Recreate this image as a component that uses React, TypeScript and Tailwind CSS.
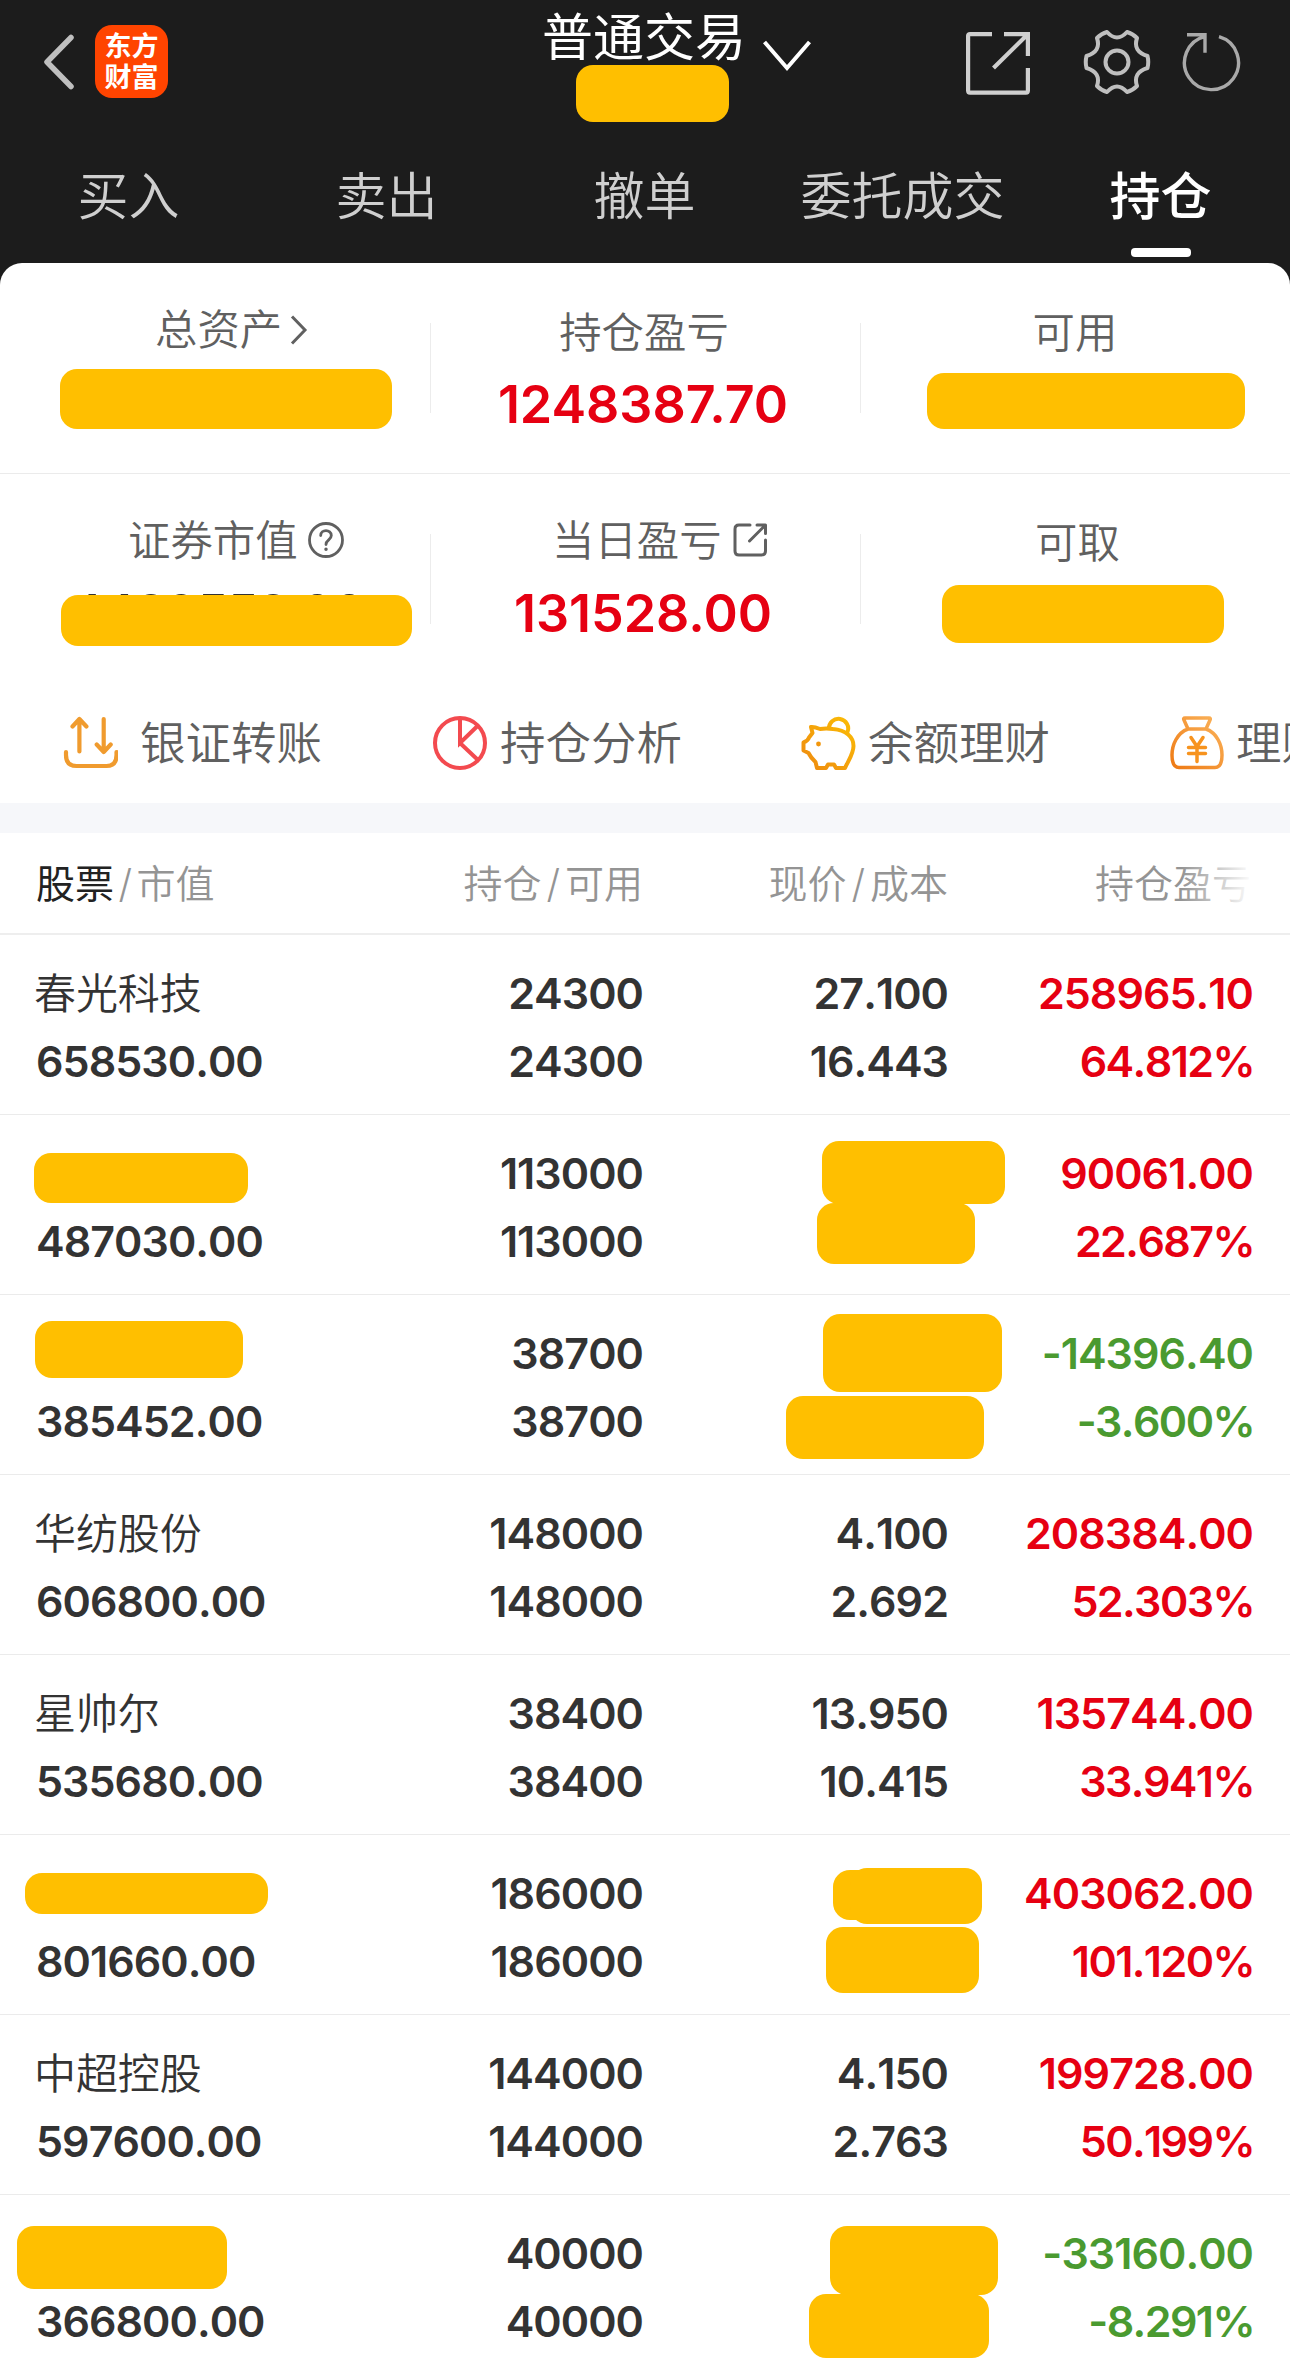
import clsx from "clsx";
import type { ReactNode } from "react";

type Holding = {
  name?: string;
  value: string;
  amount: string;
  price?: string;
  cost?: string;
  profit: string;
  rate: string;
  masks?: string[];
};

const tabs = ["买入", "卖出", "撤单", "委托成交", "持仓"];

const holdings: Holding[] = [
  { name: "春光科技", value: "658530.00", amount: "24300", price: "27.100", cost: "16.443", profit: "258965.10", rate: "64.812%" },
  {
    value: "487030.00", amount: "113000", profit: "90061.00", rate: "22.687%",
    masks: [
      "left-[34px] top-[38px] w-[214px] h-[50px]",
      "left-[822px] top-[26px] w-[183px] h-[63px]",
      "left-[817px] top-[88px] w-[158px] h-[61px]",
    ],
  },
  {
    value: "385452.00", amount: "38700", profit: "-14396.40", rate: "-3.600%",
    masks: [
      "left-[35px] top-[26px] w-[208px] h-[57px]",
      "left-[823px] top-[19px] w-[179px] h-[78px]",
      "left-[786px] top-[101px] w-[198px] h-[63px]",
    ],
  },
  { name: "华纺股份", value: "606800.00", amount: "148000", price: "4.100", cost: "2.692", profit: "208384.00", rate: "52.303%" },
  { name: "星帅尔", value: "535680.00", amount: "38400", price: "13.950", cost: "10.415", profit: "135744.00", rate: "33.941%" },
  {
    value: "801660.00", amount: "186000", profit: "403062.00", rate: "101.120%",
    masks: [
      "left-[25px] top-[38px] w-[243px] h-[41px]",
      "left-[833px] top-[35px] w-[60px] h-[50px]",
      "left-[850px] top-[33px] w-[132px] h-[56px]",
      "left-[826px] top-[92px] w-[153px] h-[66px]",
    ],
  },
  { name: "中超控股", value: "597600.00", amount: "144000", price: "4.150", cost: "2.763", profit: "199728.00", rate: "50.199%" },
  {
    value: "366800.00", amount: "40000", profit: "-33160.00", rate: "-8.291%",
    masks: [
      "left-[17px] top-[31px] w-[210px] h-[63px]",
      "left-[830px] top-[31px] w-[168px] h-[69px]",
      "left-[809px] top-[99px] w-[180px] h-[64px]",
    ],
  },
];

// Privacy block painted over a private figure
function Mask({ className }: { className: string }) {
  return <div className={clsx("rounded-[17px] bg-[#ffbf00]", className)} />;
}

function Header() {
  return (
    <header className="bg-[#1c1c1c] h-[285px]">
      <div className="flex h-[123px]">
        <div className="flex w-[542px] pl-[43px] pt-[25px]">
          <svg className="w-[32px] h-[56px] mt-[9px]" viewBox="0 0 32 56" fill="none" stroke="#bfbfbf" strokeWidth="5.5" strokeLinecap="round" strokeLinejoin="round">
            <path d="M28 3.5 4 28l24 24.5" />
          </svg>
          <div className="ml-[20px] flex size-[73px] flex-col items-center justify-center rounded-[17px] bg-[#ff4400] text-[27px] font-bold leading-[31px] text-white">
            <span>东方</span>
            <span>财富</span>
          </div>
        </div>
        <div className="flex w-[204px] flex-col items-center">
          <h1 className="h-[65px] whitespace-nowrap text-[51px] leading-[75px] text-white">普通交易</h1>
          <Mask className="ml-[34px] h-[57px] w-[153px] self-start" />
        </div>
        <svg className="ml-[16px] mt-[38px] h-[34px] w-[50px]" viewBox="0 0 50 34" fill="none" stroke="#fff" strokeWidth="4">
          <path d="m2.5 4 22.500 26 22.500-26" />
        </svg>
        <div className="flex pl-[151px] text-[#cfcfcf]">
          <svg className="mt-[29px] h-[68px] w-[68px]" viewBox="0 0 68 68" fill="none" stroke="currentColor" strokeWidth="4.2">
            <path d="M29 5.100H7Q5.100 5.100 5.100 7V61.500Q5.100 63.600 7 63.600H63Q64.900 63.600 64.900 61.500V39M41 5.100h23.900V27M64 6 30.500 39" />
          </svg>
          <svg className="ml-[52px] mt-[28px] h-[68px] w-[68px] text-[#bfbfbf]" viewBox="0 0 68 68" fill="none" stroke="currentColor" strokeWidth="4" strokeLinejoin="round">
            <path d="M24 4Q34 15 44 4Q49.500 5.500 54 10Q49.500 23.500 64.500 28Q66 34 64.500 40Q49.500 44.500 54 58Q49.500 62.500 44 64Q34 53 24 64Q18.500 62.500 14 58Q18.500 44.500 3.500 40Q2 34 3.500 28Q18.500 23.500 14 10Q18.500 5.500 24 4Z" />
            <circle cx="34" cy="34" r="11.500" />
          </svg>
          <svg className="ml-[31px] mt-[30px] h-[64px] w-[64px] text-[#a9a9a9]" viewBox="0 0 64 64" fill="none" stroke="currentColor" strokeWidth="3.4">
            <path d="M37 6.700A27 27 0 1 1 23.500 6.300M5 4.800h18v18" />
          </svg>
        </div>
      </div>
      <nav className="grid grid-cols-5">
        {tabs.map((tab) => (
          <div
            key={tab}
            className={clsx(
              "flex h-[140px] flex-col items-center pt-[37px] pr-[1px] text-[51px] leading-[74px]",
              tab === "持仓" ? "font-medium text-white" : "font-[350] text-[#cfcfcf]",
            )}
          >
            {tab}
            {tab === "持仓" && <span className="ml-[1px] mt-[14px] h-[9px] w-[60px] shrink-0 rounded-[4px] bg-white" />}
          </div>
        ))}
      </nav>
    </header>
  );
}

function Stat({ label, labelClass, children, divider }: { label: ReactNode; labelClass: string; children: ReactNode; divider?: boolean }) {
  return (
    <div className="relative">
      <div className={clsx("flex h-[60px] items-center text-[42.4px] font-[350] leading-[60px] text-[#606060]", labelClass)}>{label}</div>
      {children}
      {divider && <span className="absolute -right-px top-[60px] h-[90px] w-px bg-[#ececec]" />}
    </div>
  );
}

function Summary() {
  return (
    <section className="-mt-[22px] rounded-t-[22px] bg-white">
      <div className="grid h-[211px] grid-cols-3 border-b border-[#ebebeb]">
        <Stat
          divider
          labelClass="mt-[37px] pl-[155px]"
          label={
            <>
              总资产
              <svg className="ml-[7px] h-[32px] w-[20px]" viewBox="0 0 20 32" fill="none" stroke="currentColor" strokeWidth="3">
                <path d="m3 2.500 13 13.500L3 29.500" />
              </svg>
            </>
          }
        >
          <Mask className="ml-[60px] mt-[9px] h-[60px] w-[332px]" />
        </Stat>
        <Stat divider labelClass="mt-[40px] justify-center pr-[2px]" label="持仓盈亏">
          <div className="mt-[10px] pr-[4px] text-center text-[52px] font-semibold leading-[64px] text-[#e60012]">1248387.70</div>
        </Stat>
        <Stat labelClass="mt-[40px] justify-center" label="可用">
          <Mask className="ml-[67px] mt-[10px] h-[56px] w-[318px]" />
        </Stat>
      </div>
      <div className="grid h-[211px] grid-cols-3">
        <Stat
          divider
          labelClass="mt-[37px] pl-[128px]"
          label={
            <>
              证券市值
              <svg className="ml-[9px] -mt-[2px] h-[38px] w-[38px]" viewBox="0 0 38 38" fill="none" stroke="currentColor" strokeWidth="2.8" strokeLinecap="round">
                <circle cx="19" cy="19" r="16.500" />
                <path d="M13.700 14.500c0-6.500 10.600-6.500 10.600 0 0 4.500-5.300 4.300-5.300 9" />
                <circle cx="19" cy="28.300" r="1" fill="currentColor" strokeWidth="1.5" />
              </svg>
            </>
          }
        >
          <div className="relative mt-[10px] pl-[70px] text-[51px] font-medium leading-[64px] tracking-[-1.1px] text-[#333]">
            4439552.00
            <Mask className="absolute left-[61px] top-[14px] h-[51px] w-[351px]" />
          </div>
        </Stat>
        <Stat
          divider
          labelClass="mt-[37px] pl-[122px]"
          label={
            <>
              当日盈亏
              <svg className="ml-[9px] -mt-[2px] h-[36px] w-[38px]" viewBox="0 0 38 36" fill="none" stroke="currentColor" strokeWidth="3" strokeLinecap="round" strokeLinejoin="round">
                <path d="M19 3H8Q4 3 4 7v22q0 4 4 4h22.500q4 0 4-4V18M26 3h8.500v8.500M34 3.500 18.500 19" />
              </svg>
            </>
          }
        >
          <div className="mt-[11px] pr-[4px] text-center text-[52px] font-semibold leading-[64px] text-[#e60012]">131528.00</div>
        </Stat>
        <Stat labelClass="mt-[39px] pl-[175px]" label="可取">
          <Mask className="ml-[82px] mt-[12px] h-[58px] w-[282px]" />
        </Stat>
      </div>
    </section>
  );
}

function Actions() {
  return (
    <section className="flex h-[118px] overflow-hidden bg-white pl-[62px] pt-[29px] text-[45.5px] font-[350] leading-[60px] text-[#606060]">
      <div className="flex w-[369px] shrink-0">
        <svg className="mt-px h-[56px] w-[56px]" viewBox="0 0 56 56" fill="none" stroke="#f09b2e" strokeWidth="4.2" strokeLinecap="round" strokeLinejoin="round">
          <path d="M17.400 36.500V4.500M10.500 11.500 17.400 4l7 7.500M41.700 4v32.500M34.700 29.500 41.700 37l7-7.500M4 37v3q0 11 10.500 11h30q10 0 10-11v-3" />
        </svg>
        <span className="ml-[22px]">银证转账</span>
      </div>
      <div className="flex w-[369px] shrink-0">
        <svg className="mt-px h-[56px] w-[56px]" viewBox="0 0 56 56" fill="none" stroke="#f34a4f" strokeWidth="4">
          <circle cx="29" cy="28" r="25" />
          <path d="M29 3v25l18-17.500M29 28l18.500 17.500" />
        </svg>
        <span className="ml-[13px]">持仓分析</span>
      </div>
      <div className="flex w-[368px] shrink-0">
        <svg className="mt-px h-[56px] w-[56px]" viewBox="0 0 56 56" fill="none" strokeWidth="4" strokeLinejoin="round">
          <defs>
            <linearGradient id="pig" x1="0" y1="1" x2="1" y2="0">
              <stop stopColor="#ee8a10" />
              <stop offset="1" stopColor="#fbbd05" />
            </linearGradient>
          </defs>
          <path stroke="url(#pig)" d="M29 14A9.600 9.600 0 1 1 47.500 17M11 12Q14 11.500 20 14Q26 13 33 14C46 15 53.500 22 53.500 31C53.500 39 48 46 45 53H36L34 49.500H28L26 53H17L15.500 47Q11 43 8.500 38L3.500 35.500V27.500Q8 26 9 22.500L12.500 18Z" />
          <circle cx="18.500" cy="29" r="2.400" fill="#f2960c" />
        </svg>
        <span className="ml-[12px]">余额理财</span>
      </div>
      <div className="flex shrink-0">
        <svg className="mt-px h-[56px] w-[56px]" viewBox="0 0 56 56" fill="none" strokeWidth="3.5" strokeLinecap="round" strokeLinejoin="round">
          <defs>
            <linearGradient id="bag" x1="0" y1="1" x2="1" y2="0">
              <stop stopColor="#ee7a14" />
              <stop offset="1" stopColor="#fbb45c" />
            </linearGradient>
          </defs>
          <path stroke="url(#bag)" d="M17 3h24q2 0 1 2l-4 9H20l-4-9q-1-2 1-2ZM20 14C9 18 4 30 4 40Q4 52.500 11 52.500H47Q54 52.500 54 40C54 30 49 18 38 14" />
          <path stroke="#f7931e" d="m23 22.500 6 9 6-9M20.500 32.500h17M20.500 38.500h17M29 32v14.500" />
        </svg>
        <span className="ml-[12px] whitespace-nowrap">理财</span>
      </div>
    </section>
  );
}

const columns = "grid grid-cols-[336px_307px_305px_305px] pr-[37px]";

function HoldingRow({ item }: { item: Holding }) {
  const tone = item.profit.startsWith("-") ? "text-[#4a9a30]" : "text-[#e60012]";
  return (
    <div className={clsx(columns, "relative h-[180px] border-b border-[#ebebeb] pt-[24px] text-right text-[43px] font-[560] leading-[68px] tracking-[-0.95px] text-[#333] [font-kerning:none]")}>
      <div className="pl-[36px] text-left">
        <div className="-ml-[2px] h-[68px] pt-px text-[42px] font-[350] tracking-[-0.1px]">{item.name}</div>
        <div>{item.value}</div>
      </div>
      <div>
        <div>{item.amount}</div>
        <div>{item.amount}</div>
      </div>
      <div>
        <div>{item.price}</div>
        <div>{item.cost}</div>
      </div>
      <div className={tone}>
        <div>{item.profit}</div>
        <div className="-mr-[1px] tracking-[-1.6px]">{item.rate}</div>
      </div>
      {item.masks?.map((mask) => (
        <Mask key={mask} className={clsx("absolute", mask)} />
      ))}
    </div>
  );
}

export default function App() {
  return (
    <div className="h-[2369px] w-[1290px] overflow-hidden bg-white font-['Inter','Noto_Sans_CJK_SC',sans-serif]">
      <Header />
      <Summary />
      <Actions />
      <div className="h-[30px] bg-[#f6f7fa]" />
      <div className={clsx(columns, "h-[102px] border-b-2 border-[#eee] text-right text-[39px] font-[350] leading-[102px] text-[#949494]")}>
        <div className="pl-[36px] text-left">
          <span className="font-normal text-[#222]">股票</span>
          <span className="px-[4.5px]">/</span>
          市值
        </div>
        <div>持仓<span className="px-[5px]">/</span>可用</div>
        <div>现价<span className="px-[5px]">/</span>成本</div>
        <div className="relative pr-[2px]">
          持仓盈亏
          <span className="absolute right-0 top-0 h-[98px] w-[72px] bg-linear-to-r from-white/0 to-white" />
        </div>
      </div>
      {holdings.map((item) => (
        <HoldingRow key={item.value} item={item} />
      ))}
    </div>
  );
}
